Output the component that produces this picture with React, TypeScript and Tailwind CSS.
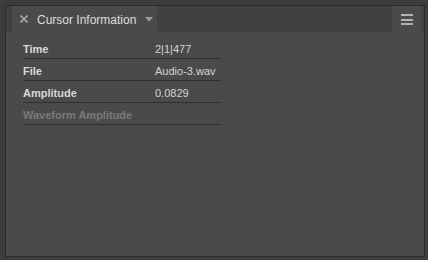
import React from "react";

const rows = [
  { label: "Time", value: "2|1|477" },
  { label: "File", value: "Audio-3.wav" },
  { label: "Amplitude", value: "0.0829" },
  { label: "Waveform Amplitude", value: "", muted: true },
];

function CloseIcon() {
  return (
    <svg width="8" height="8" viewBox="0 0 8 8" className="shrink-0">
      <path d="M0.5 0.5 L7.5 7.5 M7.5 0.5 L0.5 7.5" stroke="#a6a6a6" strokeWidth="1.6" />
    </svg>
  );
}

function Caret() {
  return (
    <svg width="8" height="5" viewBox="0 0 8 5" className="shrink-0">
      <path d="M0 0 H8 L4 4.5 Z" fill="#9c9c9c" />
    </svg>
  );
}

export default function App() {
  return (
    <div
      className="w-[428px] h-[260px] bg-[#3c3c3c] pl-[5px] pt-[5px] pr-[3px] pb-[3px] flex"
      style={{ fontFamily: '"Liberation Sans", Arial, sans-serif' }}
    >
      <div className="flex-1 flex flex-col border border-[#2b2b2b] bg-[#4a4a4a]">
        {/* tab strip */}
        <div className="h-[26px] flex bg-[#414141] pl-[6px] pr-[3px]">
          <div className="w-[145px] flex items-center bg-[#4a4a4a] pl-[8px] gap-[9px]">
            <CloseIcon />
            <span className="text-[12px] text-[#dedede] leading-none pt-[1px]">
              Cursor Information
            </span>
            <Caret />
          </div>
          <div className="flex-1" />
          <button className="w-[29px] bg-[#4a4a4a] flex flex-col items-center justify-center gap-[2.5px] pt-[1px]">
            <span className="block w-[12px] h-[2px] bg-[#b2b2b2]" />
            <span className="block w-[12px] h-[2px] bg-[#b2b2b2]" />
            <span className="block w-[12px] h-[2px] bg-[#b2b2b2]" />
          </button>
        </div>

        {/* content */}
        <div className="pl-[17px] pt-[5px]">
          <div className="w-[198px] flex flex-col">
            {rows.map((r) => (
              <div
                key={r.label}
                className="h-[22px] flex items-end pb-[2px] border-b border-[#2e2e2e] text-[11px] leading-[14px]"
              >
                <span
                  className={
                    "w-[132px] font-bold " +
                    (r.muted ? "text-[#7a7a7a]" : "text-[#d9d9d9]")
                  }
                >
                  {r.label}
                </span>
                <span className="text-[#d4d4d4]">{r.value}</span>
              </div>
            ))}
          </div>
        </div>
      </div>
    </div>
  );
}
